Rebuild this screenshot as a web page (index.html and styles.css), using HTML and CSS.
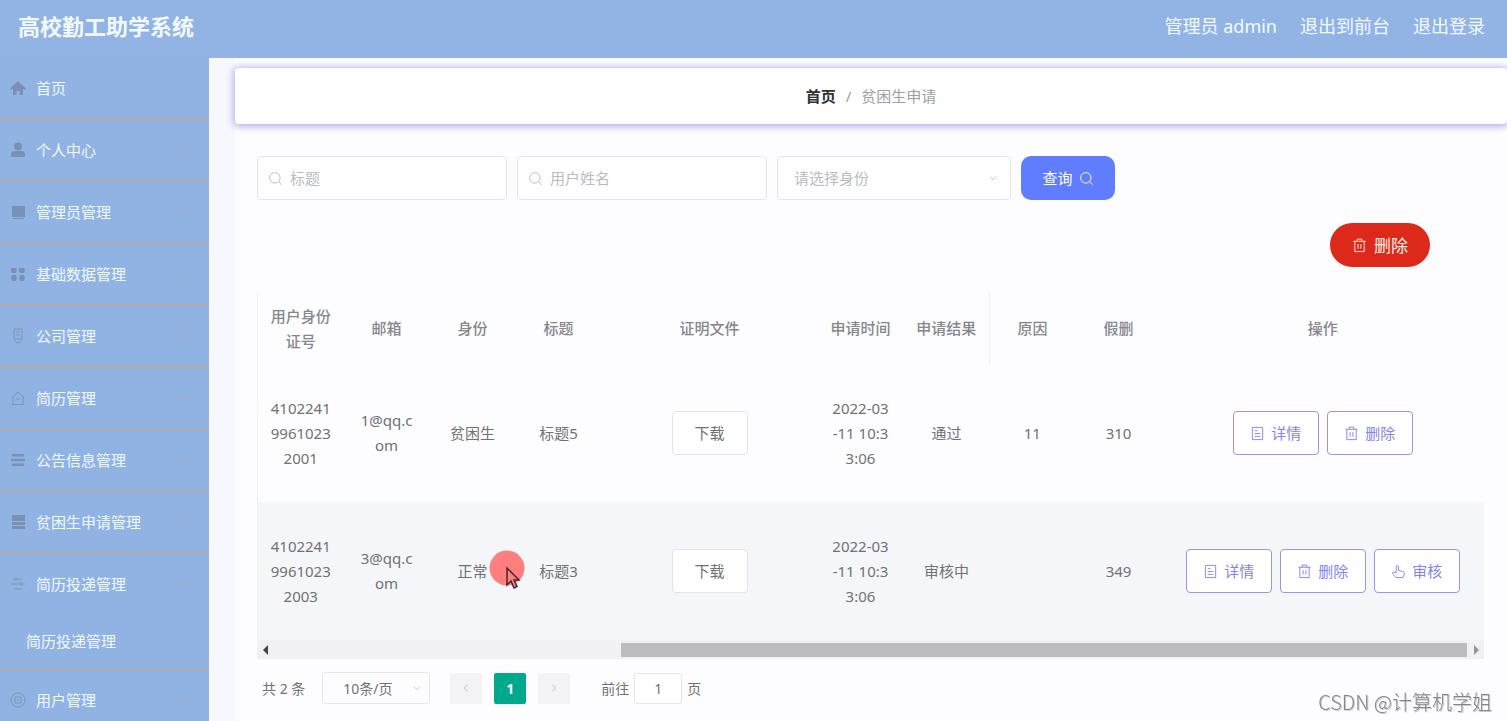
FILE: index.html
```html
<!DOCTYPE html>
<html lang="zh-CN">
<head>
<meta charset="utf-8">
<title>高校勤工助学系统</title>
<link rel="stylesheet" href="styles.css">
</head>
<body>
<svg class="sprite" aria-hidden="true">
  <symbol id="search" viewBox="0 0 16 16"><circle cx="7.3" cy="7.3" r="5.6"/><path d="M11.4 11.4 14.4 14.6"/></symbol>
  <symbol id="down" viewBox="0 0 12 12"><path d="M2 4 6 8 10 4"/></symbol>
  <symbol id="trash" viewBox="0 0 16 16"><path d="M1.5 3.5h13M5.5 3.2V1.2h5v2.3M3 3.5v11h10v-11M6.5 6.5v5M9.5 6.5v5"/></symbol>
  <symbol id="doc" viewBox="0 0 16 16"><path d="M2.5 1.5h11v13h-11zM5 5h3M5 8h6M5 11h6"/></symbol>
  <symbol id="hand" viewBox="0 0 16 16"><path d="M5.5 9.5V3a1.2 1.2 0 0 1 2.5 0v4l4.500 1c1.300.4 2 1 1.800 2.300L13.500 13c-.3 1-.8 1.500-1.800 1.500H6.500c-1 0-1.500-.3-2-1L1.500 10c-.5-1 .5-1.800 1.500-1.300z"/></symbol>
</svg>
<header class="topbar">
  <h1 class="brand">高校勤工助学系统</h1>
  <nav class="account">
    <span>管理员 admin</span>
    <a href="#">退出到前台</a>
    <a href="#">退出登录</a>
  </nav>
</header>
<div class="layout">
  <aside class="sidebar">
    <ul class="menu">
      <li><a href="#"><svg class="glyph" viewBox="0 0 16 16"><path d="M8 1 0 8.500 1.500 10 3 8.700V15h3.500v-4h3v4H13V8.700l1.500 1.300L16 8.500z"/></svg>首页</a></li>
      <li><a href="#"><svg class="glyph" viewBox="0 0 16 16"><circle cx="8" cy="4.500" r="4"/><path d="M1 15v-3c0-2 2-3 4-3h6c2 0 4 1 4 3v3z"/></svg><span>个人中心</span><svg class="arrow"><use href="#down"/></svg></a></li>
      <li><a href="#"><svg class="glyph" viewBox="0 0 16 16"><path d="M2 2h13v11H2zM3 14h11v1H3z"/></svg><span>管理员管理</span><svg class="arrow"><use href="#down"/></svg></a></li>
      <li><a href="#"><svg class="glyph" viewBox="0 0 16 16"><path d="M1 2h5l1 2-1 3H2L1 5zM9 2h5l1 2-1 3h-4L9 5zM2 9h4l1 3-1 3H2l-1-3zM10 9h4l1 3-1 3h-4l-1-3z"/></svg><span>基础数据管理</span><svg class="arrow"><use href="#down"/></svg></a></li>
      <li><a href="#"><svg class="glyph line" viewBox="0 0 16 16"><path d="M4 1h8v10H4zM6 14.500h4M6 4h4M6 7h4M4 11l2 3M12 11l-2 3"/></svg><span>公司管理</span><svg class="arrow"><use href="#down"/></svg></a></li>
      <li><a href="#"><svg class="glyph line" viewBox="0 0 16 16"><path d="M2 7.500 8 2l6 5.500M3 7v7.500h10V7M2 14.500h12M6 9h4"/></svg><span>简历管理</span><svg class="arrow"><use href="#down"/></svg></a></li>
      <li><a href="#"><svg class="glyph" viewBox="0 0 16 16"><path d="M2 2h12v2.500H2zM1 6.800h14v2.500H1zM2 11.500h12V14H2z"/></svg><span>公告信息管理</span><svg class="arrow"><use href="#down"/></svg></a></li>
      <li><a href="#"><svg class="glyph" viewBox="0 0 16 16"><path d="M2 1h13v6H2zM2 8h13v3H2zM2 12h13v3H2z"/></svg><span>贫困生申请管理</span><svg class="arrow"><use href="#down"/></svg></a></li>
      <li>
        <a href="#"><svg class="glyph line" viewBox="0 0 16 16"><path d="M3 3h10M1 8h14M4 13h8M6 1v4M11 6v4"/></svg><span>简历投递管理</span><svg class="arrow"><use href="#down"/></svg></a>
        <a class="child" href="#">简历投递管理</a>
      </li>
      <li><a href="#"><svg class="glyph line" viewBox="0 0 16 16"><circle cx="8" cy="8" r="7"/><path d="M5 5h6v6H5zM7 8h2"/></svg><span>用户管理</span><svg class="arrow"><use href="#down"/></svg></a></li>
    </ul>
  </aside>
  <main class="main">
    <nav class="crumbs"><a href="#">首页</a><span>/</span><span>贫困生申请</span></nav>
    <section class="panel">
      <form class="filters">
        <label class="field"><svg class="icon"><use href="#search"/></svg><input type="text" placeholder="标题" aria-label="标题"></label>
        <label class="field"><svg class="icon"><use href="#search"/></svg><input type="text" placeholder="用户姓名" aria-label="用户姓名"></label>
        <label class="field pick"><select aria-label="身份"><option>请选择身份</option></select><svg class="arrow"><use href="#down"/></svg></label>
        <button class="query" type="button">查询<svg class="icon"><use href="#search"/></svg></button>
      </form>
      <div class="bulk"><button class="danger" type="button"><svg class="icon"><use href="#trash"/></svg>删除</button></div>
      <table class="grid">
        <colgroup><col class="narrow"><col class="narrow"><col class="narrow"><col class="narrow"><col class="file"><col class="narrow"><col class="narrow"><col class="narrow"><col class="narrow"><col></colgroup>
        <thead><tr><th>用户身份证号</th><th>邮箱</th><th>身份</th><th>标题</th><th>证明文件</th><th>申请时间</th><th class="ruled">申请结果</th><th>原因</th><th>假删</th><th>操作</th></tr></thead>
        <tbody>
          <tr><td>410224199610232001</td><td>1@qq.c<br>om</td><td>贫困生</td><td>标题5</td><td><button class="download" type="button">下载</button></td><td>2022-03<br>-11 10:3<br>3:06</td><td>通过</td><td>11</td><td>310</td>
            <td><div class="actions"><button type="button"><svg class="icon"><use href="#doc"/></svg>详情</button><button type="button"><svg class="icon"><use href="#trash"/></svg>删除</button></div></td></tr>
          <tr class="striped"><td>410224199610232003</td><td>3@qq.c<br>om</td><td class="pointed">正常<svg class="pointer" viewBox="0 0 36 42" aria-hidden="true"><circle cx="18" cy="18" r="17.500" fill="#ff7f7f"/><path d="M18 18v17l4-4 3 7 3-1.500-3-6.500h5z" fill="#f58280" stroke="#4a2430" stroke-width="1.500"/></svg></td><td>标题3</td><td><button class="download" type="button">下载</button></td><td>2022-03<br>-11 10:3<br>3:06</td><td>审核中</td><td></td><td>349</td>
            <td><div class="actions"><button type="button"><svg class="icon"><use href="#doc"/></svg>详情</button><button type="button"><svg class="icon"><use href="#trash"/></svg>删除</button><button type="button"><svg class="icon"><use href="#hand"/></svg>审核</button></div></td></tr>
        </tbody>
      </table>
      <div class="scroll" aria-hidden="true"><svg viewBox="0 0 8 10"><path d="M6 0v10L1 5z"/></svg><div class="track"><div class="thumb"></div></div><svg class="dim" viewBox="0 0 8 10"><path d="M2 0v10l5-5z"/></svg></div>
      <div class="pager">
        <span>共 2 条</span>
        <label class="size"><select aria-label="每页条数"><option>10条/页</option></select><svg class="arrow"><use href="#down"/></svg></label>
        <div class="pages">
          <button type="button" aria-label="上一页" disabled><svg class="arrow prev"><use href="#down"/></svg></button>
          <button class="current" type="button">1</button>
          <button type="button" aria-label="下一页" disabled><svg class="arrow next"><use href="#down"/></svg></button>
        </div>
        <label class="jump">前往<input type="text" value="1">页</label>
      </div>
    </section>
  </main>
</div>
<div class="credit">CSDN @计算机学姐</div>
</body>
</html>
```
FILE: styles.css
```css
* { box-sizing: border-box; }

body {
  margin: 0;
  min-height: 100vh;
  overflow: hidden;
  background: #fdfdff;
  color: #707175;
  font: 15px/25px "Noto Sans", "Noto Sans CJK SC", sans-serif;
}

button, input, select { font: inherit; color: inherit; }
button { cursor: pointer; }
a { color: inherit; text-decoration: none; }
svg { flex: none; }
.sprite { position: absolute; width: 0; height: 0; }
.icon { width: 15px; height: 15px; fill: none; stroke: currentColor; stroke-width: 1; }
.arrow { width: 10px; height: 10px; fill: none; stroke: currentColor; stroke-width: 1; }

.topbar {
  display: flex;
  align-items: center;
  justify-content: space-between;
  height: 58px;
  padding: 0 22px 6px 18px;
  background: #92b4e4;
  color: #f3faff;
}
.brand { margin: 0; font-size: 22px; line-height: 32px; }
.account { display: flex; gap: 23px; font-size: 18px; }

.layout { display: flex; height: calc(100vh - 58px); }
.sidebar {
  flex: none;
  width: 209px;
  overflow: hidden;
  background: #91b3e4;
  color: #f0f9ff;
}
.menu { margin: 0; padding: 0; list-style: none; }
.menu li { border-bottom: 2px solid #b5adad; }
.menu a { display: flex; align-items: center; height: 60px; padding: 0 22px 0 10px; gap: 10px; }
.menu .child { height: 54px; padding-left: 26px; }
.menu .arrow { margin-left: auto; color: #cba6b1; }
.glyph { width: 16px; height: 16px; fill: #7b91b2; }
.glyph.line { fill: none; stroke: #7b95b9; stroke-width: 1; }

.main { flex: 1; min-width: 0; padding: 10px 0 0 26px; background: linear-gradient(90deg, #f7f8fd 26px, #fdfdff 26px); }
.crumbs {
  display: flex;
  align-items: center;
  justify-content: center;
  gap: 10px;
  height: 56px;
  border-radius: 4px;
  background: #fefefe;
  box-shadow: 0 1px 7px 2px #b9b2ec;
  color: #9da0a8;
}
.crumbs a { color: #303133; font-weight: bold; }

.panel { padding: 32px 23px 0 22px; }
.filters { display: flex; gap: 10px; }
.field {
  display: flex;
  align-items: center;
  gap: 7px;
  width: 250px;
  height: 44px;
  padding: 0 10px;
  border: 1px solid #e5e6ea;
  border-radius: 4px;
  background: #fefefe;
  color: #b9bcc2;
}
.field input, .field select, .size select {
  flex: 1;
  min-width: 0;
  padding: 0;
  border: 0;
  outline: 0;
  background: transparent;
  appearance: none;
}
.field input::placeholder { color: #b9bcc2; }
.pick { width: 234px; padding: 0 12px 0 16px; }
.query {
  display: flex;
  align-items: center;
  justify-content: center;
  gap: 6px;
  width: 94px;
  height: 44px;
  border: 0;
  border-radius: 10px;
  background: #607cff;
  color: #fff;
}
.bulk { display: flex; justify-content: flex-end; padding: 23px 54px 26px 0; }
.danger {
  display: flex;
  align-items: center;
  justify-content: center;
  gap: 7px;
  width: 100px;
  height: 44px;
  border: 0;
  border-radius: 22px;
  background: #dc2919;
  color: #fff1e8;
  font-size: 17px;
}

.grid { width: 100%; table-layout: fixed; border-collapse: collapse; border-left: 1px solid #f0f1f8; text-align: center; }
.narrow { width: 86px; }
.file { width: 216px; }
.grid th, .grid td { padding: 0 12px; word-break: break-all; }
.grid th { height: 71px; color: #85878c; font-weight: 500; }
.grid td { height: 138px; }
.grid .ruled { border-right: 1px solid #eff0f5; }
.striped { background: #f5f6fa; }
.download { width: 76px; height: 44px; padding: 0; border: 1px solid #e2e4e9; border-radius: 4px; background: #fff; }
.actions { display: flex; justify-content: center; gap: 8px; }
.actions button {
  display: flex;
  align-items: center;
  justify-content: center;
  gap: 6px;
  flex: none;
  width: 86px;
  height: 44px;
  padding: 0;
  border: 1px solid #9c94e4;
  border-radius: 4px;
  background: #fff;
  color: #8484ea;
}
.grid .pointed { position: relative; }
.pointer { position: absolute; left: 59px; top: 48px; width: 36px; height: 42px; }

.scroll { display: flex; align-items: center; gap: 5px; height: 19px; padding: 0 4px 0 5px; background: #f0f0f5; }
.scroll svg { width: 8px; height: 10px; fill: #444; }
.scroll .dim { fill: #97979b; }
.track { display: flex; flex: 1; justify-content: flex-end; }
.thumb { width: 71%; height: 14px; background: #bcbbc0; }

.pager { display: flex; align-items: center; height: 32px; margin-top: 13px; padding-left: 5px; font-size: 14px; }
.size {
  display: flex;
  align-items: center;
  width: 108px;
  height: 32px;
  margin-left: 17px;
  padding: 0 7px 0 20px;
  border: 1px solid #e5e6ea;
  border-radius: 3px;
}
.size .arrow { color: #c5c7cc; }
.pages { display: flex; gap: 12px; margin: 0 31px 0 20px; }
.pages button { display: flex; align-items: center; justify-content: center; width: 32px; height: 31px; padding: 0; border: 0; border-radius: 2px; background: #f3f3f6; color: #b7b8be; }
.pages .current { background: #00a88c; color: #fff; font-weight: bold; }
.prev { transform: rotate(90deg); }
.next { transform: rotate(-90deg); }
.jump { display: flex; align-items: center; gap: 5px; }
.jump input { width: 48px; height: 31px; border: 1px solid #e5e6ea; border-radius: 3px; background: #fff; text-align: center; }

.credit {
  position: fixed;
  right: 15px;
  bottom: 4px;
  color: #85868a;
  font-family: "Noto Sans CJK SC", sans-serif;
  font-size: 20px;
  font-weight: 300;
  line-height: 30px;
  text-shadow: 1px 1px 0 #ccc;
}
```
